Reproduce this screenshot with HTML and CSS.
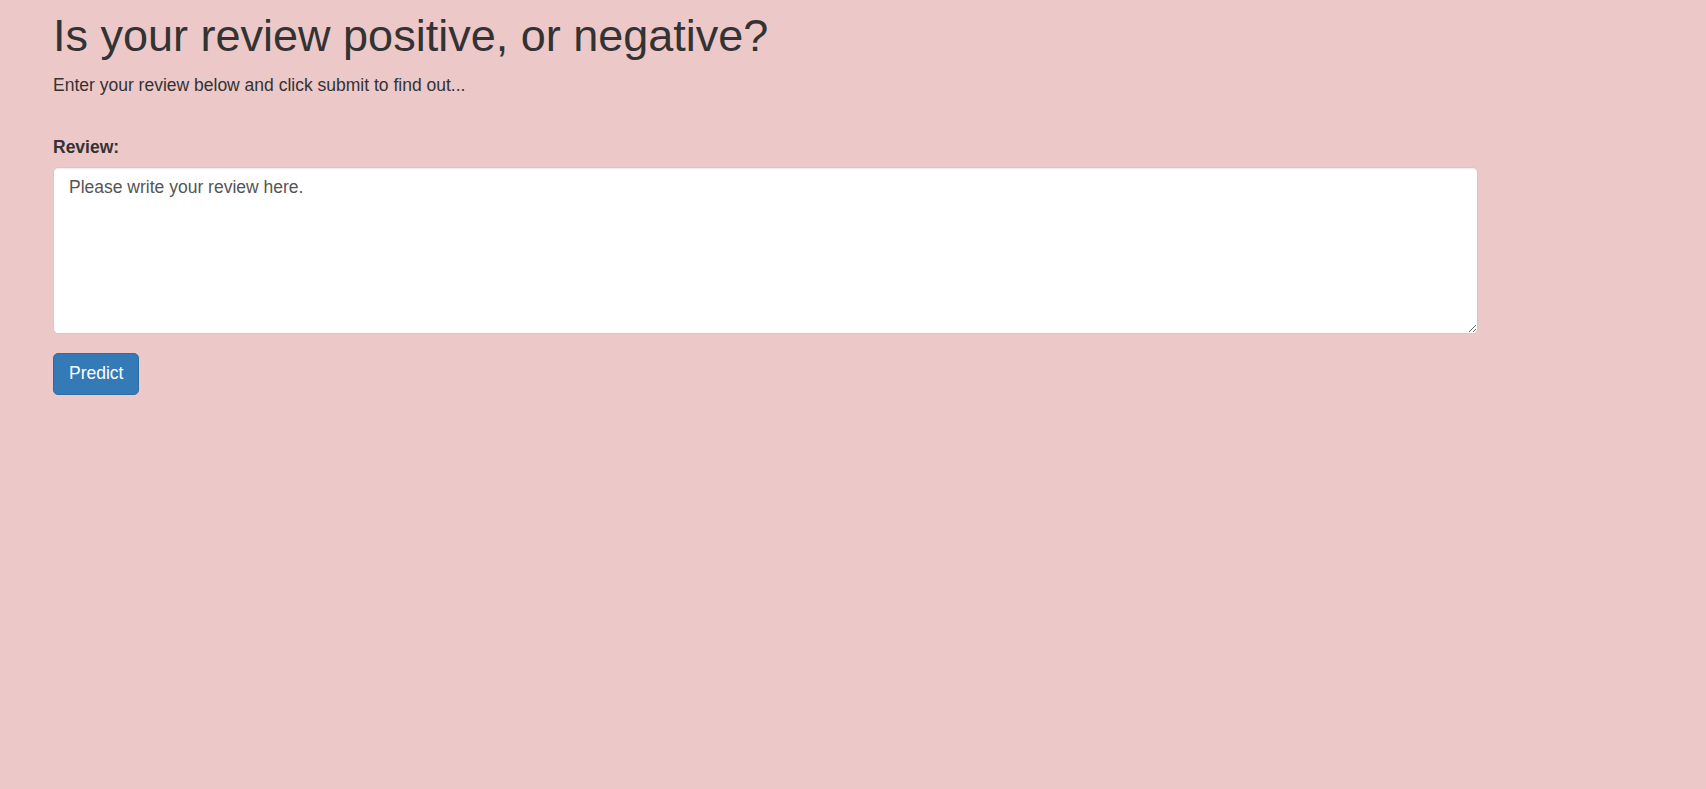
FILE: index.html
```html
<!DOCTYPE html>
<html lang="en">
<head>
<meta charset="utf-8">
<title>Review Sentiment</title>
<link rel="stylesheet" href="styles.css">
</head>
<body>
<div class="container">
  <h1 class="title">Is your review positive, or negative?</h1>
  <p class="lead-text">Enter your review below and click submit to find out...</p>
  <form class="review-form">
    <div class="form-group">
      <label class="form-label" for="review">Review:</label>
      <textarea class="form-control" id="review" name="review">Please write your review here.</textarea>
    </div>
    <button type="button" class="btn-primary">Predict</button>
  </form>
</div>
</body>
</html>
```
FILE: styles.css
```css
html, body {
  margin: 0;
  padding: 0;
}
body {
  background: #ecc8c8;
  color: #333;
  font-family: "Liberation Sans", Arial, Helvetica, sans-serif;
  font-size: 17.5px;
  line-height: 25px;
  min-height: 789px;
}
.container {
  padding-left: 53px;
}
.title {
  font-size: 45px;
  font-weight: 500;
  line-height: 49.5px;
  margin: 11px 0 12px;
  color: #333;
}
.lead-text {
  margin: 0;
}
.review-form {
  margin-top: 37px;
}
.form-group {
  display: flex;
  flex-direction: column;
  align-items: flex-start;
  margin-bottom: 19px;
}
.form-label {
  font-weight: bold;
  margin-bottom: 7px;
}
.form-control {
  box-sizing: border-box;
  width: 1425px;
  height: 167px;
  padding: 7.5px 15px;
  font-family: inherit;
  font-size: 17.5px;
  line-height: 25px;
  color: #555;
  background: #fff;
  border: 1px solid #ccc;
  border-radius: 5px;
  box-shadow: inset 0 1px 1px rgba(0,0,0,.075);
  margin: 0;
  resize: vertical;
}
.btn-primary {
  box-sizing: border-box;
  height: 42px;
  padding: 7.5px 15px;
  font-family: inherit;
  font-size: 17.5px;
  line-height: 25px;
  color: #fff;
  background: #337ab7;
  border: 1px solid #2e6da4;
  border-radius: 5px;
  cursor: pointer;
}
```
